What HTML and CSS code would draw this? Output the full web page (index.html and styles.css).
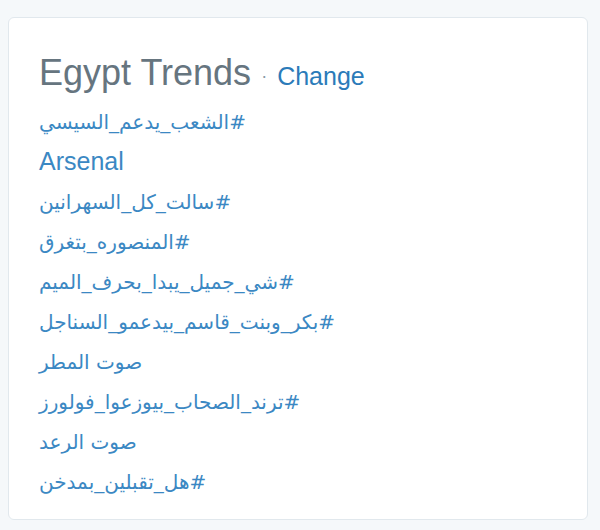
FILE: index.html
```html
<!DOCTYPE html>
<html lang="en">
<head>
<meta charset="utf-8">
<title>Egypt Trends</title>
<link rel="stylesheet" href="styles.css">
</head>
<body>
<div class="card">
  <h3 class="title">Egypt Trends <span class="dot">·</span> <a class="change" href="#">Change</a></h3>
  <ul class="trends">
    <li><a href="#" dir="rtl">#الشعب_يدعم_السيسي</a></li>
    <li><a href="#" class="latin">Arsenal</a></li>
    <li><a href="#" dir="rtl">#سالت_كل_السهرانين</a></li>
    <li><a href="#" dir="rtl">#المنصوره_بتغرق</a></li>
    <li><a href="#" dir="rtl">#شي_جميل_يبدا_بحرف_الميم</a></li>
    <li><a href="#" dir="rtl">#بكر_وبنت_قاسم_بيدعمو_السناجل</a></li>
    <li><a href="#" dir="rtl">صوت المطر</a></li>
    <li><a href="#" dir="rtl">#ترند_الصحاب_بيوزعوا_فولورز</a></li>
    <li><a href="#" dir="rtl">صوت الرعد</a></li>
    <li><a href="#" dir="rtl">#هل_تقبلين_بمدخن</a></li>
  </ul>
</div>
</body>
</html>
```

FILE: styles.css
```css
html, body {
  margin: 0;
  padding: 0;
  background: #f5f8fa;
}
body {
  padding: 17px 12px 0 8px;
  font-family: "Liberation Sans", Arial, "DejaVu Sans", sans-serif;
}
.card {
  box-sizing: border-box;
  width: 580px;
  height: 503px;
  background: #ffffff;
  border: 1px solid #e1e8ed;
  border-radius: 6px;
  padding: 35px 20px 0 30px;
}
.title {
  margin: 0;
  font-size: 36px;
  line-height: 40px;
  font-weight: normal;
  color: #66757f;
}
.dot {
  font-size: 18px;
  color: #8899a6;
  vertical-align: 3px;
}
.change {
  font-size: 25px;
  color: #2b7bb9;
  text-decoration: none;
}
.trends {
  list-style: none;
  margin: 5px 0 0;
  padding: 0;
}
.trends li {
  height: 40px;
  line-height: 40px;
  font-size: 24px;
}
.trends a {
  color: #3b88c3;
  text-decoration: none;
  font-family: "DejaVu Sans", "Liberation Sans", sans-serif;
  font-size: 20px;
}
.trends a.latin {
  font-family: "Liberation Sans", Arial, sans-serif;
  font-size: 25px;
}
```
